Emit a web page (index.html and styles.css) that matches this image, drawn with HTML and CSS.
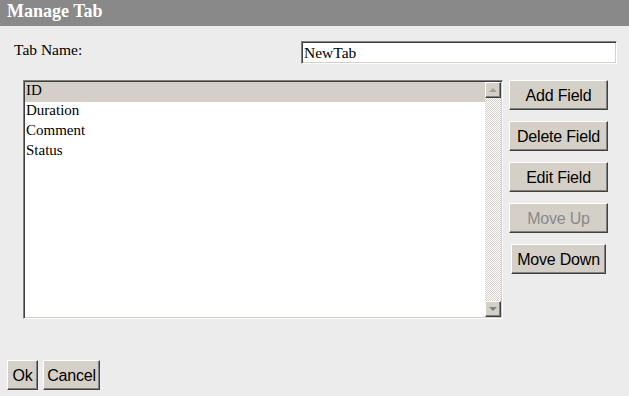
FILE: index.html
```html
<!DOCTYPE html>
<html>
<head>
<meta charset="utf-8">
<title>Manage Tab</title>
<link rel="stylesheet" href="styles.css">
</head>
<body>
<div class="dialog">
  <div class="header">Manage Tab</div>
  <div class="name-row">
    <label class="name-label" for="tabname">Tab Name:</label>
    <input class="name-input" id="tabname" type="text" value="NewTab">
  </div>
  <div class="main">
    <div class="listbox">
      <div class="items">
        <div class="item selected">ID</div>
        <div class="item">Duration</div>
        <div class="item">Comment</div>
        <div class="item">Status</div>
      </div>
      <div class="scrollbar">
        <div class="sb-btn"><span class="arrow-up"></span></div>
        <div class="sb-track"></div>
        <div class="sb-btn"><span class="arrow-down"></span></div>
      </div>
    </div>
    <div class="actions">
      <button class="btn wide">Add Field</button>
      <button class="btn wide">Delete Field</button>
      <button class="btn wide">Edit Field</button>
      <button class="btn wide disabled">Move Up</button>
      <button class="btn movedown">Move Down</button>
    </div>
  </div>
  <div class="footer">
    <button class="btn ok">Ok</button>
    <button class="btn cancel">Cancel</button>
  </div>
</div>
</body>
</html>
```

FILE: styles.css
```css
html, body {
  margin: 0;
  padding: 0;
  background: #ececec;
}
.dialog {
  width: 629px;
  height: 396px;
  background: #ececec;
  font-family: "Liberation Serif", "Times New Roman", serif;
}
.header {
  height: 26px;
  box-sizing: border-box;
  padding: 0 0 4px 7px;
  line-height: 22px;
  background: #898989;
  color: #ffffff;
  font-weight: bold;
  font-size: 18px;
}
.name-row {
  display: flex;
  justify-content: space-between;
  align-items: flex-start;
  margin-top: 15px;
  padding: 0 12px 0 14px;
  height: 23px;
}
.name-label {
  font-size: 15.5px;
  line-height: 17px;
  color: #000;
}
.name-input {
  width: 316px;
  height: 23px;
  box-sizing: border-box;
  margin: 0;
  padding: 0 2px;
  font-family: "Liberation Serif", "Times New Roman", serif;
  font-size: 15.5px;
  color: #000;
  background: #fff;
  border: 1px solid;
  border-color: #808080 #ffffff #ffffff #808080;
  box-shadow: inset 1px 1px 0 #404040, inset -1px -1px 0 #d4d0c8;
  outline: none;
}
.main {
  display: flex;
  align-items: flex-start;
  gap: 6px;
  margin-top: 16px;
  padding-left: 23px;
}
.listbox {
  width: 480px;
  height: 239px;
  box-sizing: border-box;
  display: flex;
  background: #fff;
  border: 1px solid;
  border-color: #808080 #ffffff #ffffff #808080;
  box-shadow: inset 1px 1px 0 #404040, inset -1px -1px 0 #d4d0c8;
  padding: 1px;
}
.items {
  flex: 1;
  font-size: 15px;
  color: #000;
}
.item {
  line-height: 17px;
  padding: 0 0 3px 1px;
}
.item.selected {
  background: #d4d0c8;
}
.scrollbar {
  width: 16px;
  display: flex;
  flex-direction: column;
}
.sb-btn {
  width: 16px;
  height: 16px;
  box-sizing: border-box;
  background: #d4d0c8;
  border: 1px solid;
  border-color: #ffffff #404040 #404040 #ffffff;
  box-shadow: inset -1px -1px 0 #808080;
  display: flex;
  align-items: center;
  justify-content: center;
}
.sb-track {
  flex: 1;
  background: repeating-conic-gradient(#d4d0c8 0 25%, #ffffff 0 50%) 0 0 / 2px 2px;
}
.arrow-up {
  width: 0;
  height: 0;
  border-left: 4px solid transparent;
  border-right: 4px solid transparent;
  border-bottom: 4px solid #a0a0a0;
}
.arrow-down {
  width: 0;
  height: 0;
  border-left: 4px solid transparent;
  border-right: 4px solid transparent;
  border-top: 4px solid #808080;
}
.actions {
  width: 99px;
  display: flex;
  flex-direction: column;
  align-items: center;
  gap: 11px;
}
.btn {
  height: 30px;
  box-sizing: border-box;
  margin: 0;
  padding: 2px 0 0 0;
  font-family: "Liberation Sans", Arial, sans-serif;
  font-size: 16px;
  letter-spacing: -0.2px;
  color: #000;
  background: #d4d0c8;
  border: 1px solid;
  border-color: #ffffff #404040 #404040 #ffffff;
  box-shadow: inset -1px -1px 0 #808080;
  text-align: center;
  cursor: default;
}
.btn.wide {
  width: 99px;
}
.btn.movedown {
  width: 95px;
}
.btn.disabled {
  color: #8a8a8a;
}
.footer {
  display: flex;
  gap: 5px;
  margin-top: 41px;
  padding-left: 7px;
}
.btn.ok {
  width: 31px;
}
.btn.cancel {
  width: 57px;
}
```
